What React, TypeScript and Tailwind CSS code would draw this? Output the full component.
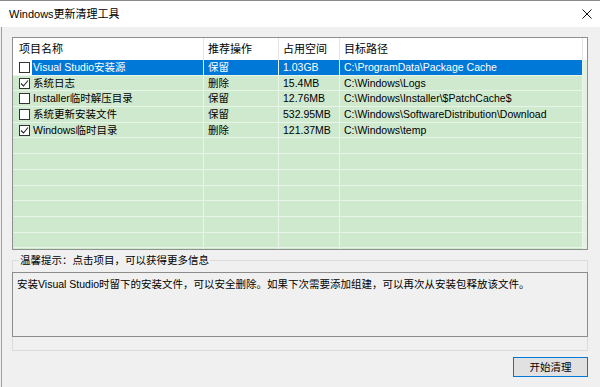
import React from 'react';

const font = "font-['Liberation_Sans','Noto_Sans_CJK_SC',sans-serif]";

const rows = [
  { name: 'Visual Studio安装源', op: '保留', size: '1.03GB', path: 'C:\\ProgramData\\Package Cache', checked: false },
  { name: '系统日志', op: '删除', size: '15.4MB', path: 'C:\\Windows\\Logs', checked: true },
  { name: 'Installer临时解压目录', op: '保留', size: '12.76MB', path: 'C:\\Windows\\Installer\\$PatchCache$', checked: false },
  { name: '系统更新安装文件', op: '保留', size: '532.95MB', path: 'C:\\Windows\\SoftwareDistribution\\Download', checked: false },
  { name: 'Windows临时目录', op: '删除', size: '121.37MB', path: 'C:\\Windows\\temp', checked: true },
];

const cols = 'grid grid-cols-[191px_75px_61px_243px_1fr]';

function CheckBox({ checked }: { checked: boolean }) {
  return (
    <div className="w-[11px] h-[11px] border border-[#333] bg-white flex items-center justify-center shrink-0">
      {checked && (
        <svg width="9" height="9" viewBox="0 0 9 9">
          <path d="M1 4.5 L3.5 7 L8 1.5" fill="none" stroke="#222" strokeWidth="1.1" />
        </svg>
      )}
    </div>
  );
}

export default function App() {
  return (
    <div className={`w-[600px] h-[387px] bg-[#f0f0f0] overflow-hidden text-[10.5px] text-black ${font}`}>
      {/* title bar */}
      <div className="h-[27px] bg-white border-t border-[#8a8a8a] flex items-center justify-between pl-[9px] pr-[8px]">
        <span className="text-[11px] leading-none">Windows更新清理工具</span>
        <svg width="10" height="10" viewBox="0 0 10 10">
          <path d="M0.5 0.5 L9.5 9.5 M9.5 0.5 L0.5 9.5" stroke="#111" strokeWidth="1" />
        </svg>
      </div>

      <div className="ml-[1px] border-l border-[#a0a0a0] h-[360px] pl-[10px] pr-[12px] pt-[10px]">
        {/* list */}
        <div className="h-[213px] border border-[#8f8f8f] bg-[#cfe9cf] overflow-hidden">
          <div className={`${cols} h-[22px] bg-white text-[11px]`}>
            <div className="border-r border-[#e5e5e5] pl-[6px] flex items-center">项目名称</div>
            <div className="border-r border-[#e5e5e5] pl-[4px] flex items-center">推荐操作</div>
            <div className="border-r border-[#e5e5e5] pl-[4px] flex items-center">占用空间</div>
            <div className="border-r border-[#e5e5e5] pl-[4px] flex items-center">目标路径</div>
            <div />
          </div>
          {rows.map((r, i) => {
            const sel = i === 0;
            const cell = sel ? 'bg-[#0078d7] text-white' : '';
            return (
              <div key={r.name} className={`${cols} h-[15.7px] leading-[15px] border-b border-[#e9f5e9]`}>
                <div className={`flex items-center border-r border-[#e9f5e9] ${sel ? 'bg-white' : ''}`}>
                  <div className="pl-[6px] pr-[2px] flex items-center">
                    <CheckBox checked={r.checked} />
                  </div>
                  <div className={`flex-1 h-full pl-[1px] ${cell}`}>{r.name}</div>
                </div>
                <div className={`pl-[4px] border-r border-[#e9f5e9] ${cell}`}>{r.op}</div>
                <div className={`pl-[4px] border-r border-[#e9f5e9] ${cell}`}>{r.size}</div>
                <div className={`pl-[4px] border-r border-[#e9f5e9] ${cell}`}>{r.path}</div>
                <div className="bg-[#e2f1e2]" />
              </div>
            );
          })}
          {Array.from({ length: 8 }).map((_, i) => (
            <div key={i} className={`${cols} h-[15.7px] border-b border-[#e9f5e9]`}>
              <div className="border-r border-[#e9f5e9]" />
              <div className="border-r border-[#e9f5e9]" />
              <div className="border-r border-[#e9f5e9]" />
              <div className="border-r border-[#e9f5e9]" />
              <div className="bg-[#e2f1e2]" />
            </div>
          ))}
        </div>

        {/* tip group */}
        <div className="relative mt-[10px] h-[91px] border border-[#dcdcdc] pt-[11px]">
          <span className="absolute -top-[8px] left-[6px] px-[1px] bg-[#f0f0f0] leading-[14px]">
            温馨提示：点击项目，可以获得更多信息
          </span>
          <div className="-ml-[1px] -mr-[1px] h-[65px] border border-[#8c8c8c] px-[4px] pt-[3px] leading-[16px]">
            安装Visual Studio时留下的安装文件，可以安全删除。如果下次需要添加组建，可以再次从安装包释放该文件。
          </div>
        </div>

        <div className="flex justify-end mt-[6px]">
          <button className="w-[75px] h-[20px] border border-[#0078d7] bg-[#e1e1e1] text-[10.5px] leading-none flex items-center justify-center">
            开始清理
          </button>
        </div>
      </div>
    </div>
  );
}
